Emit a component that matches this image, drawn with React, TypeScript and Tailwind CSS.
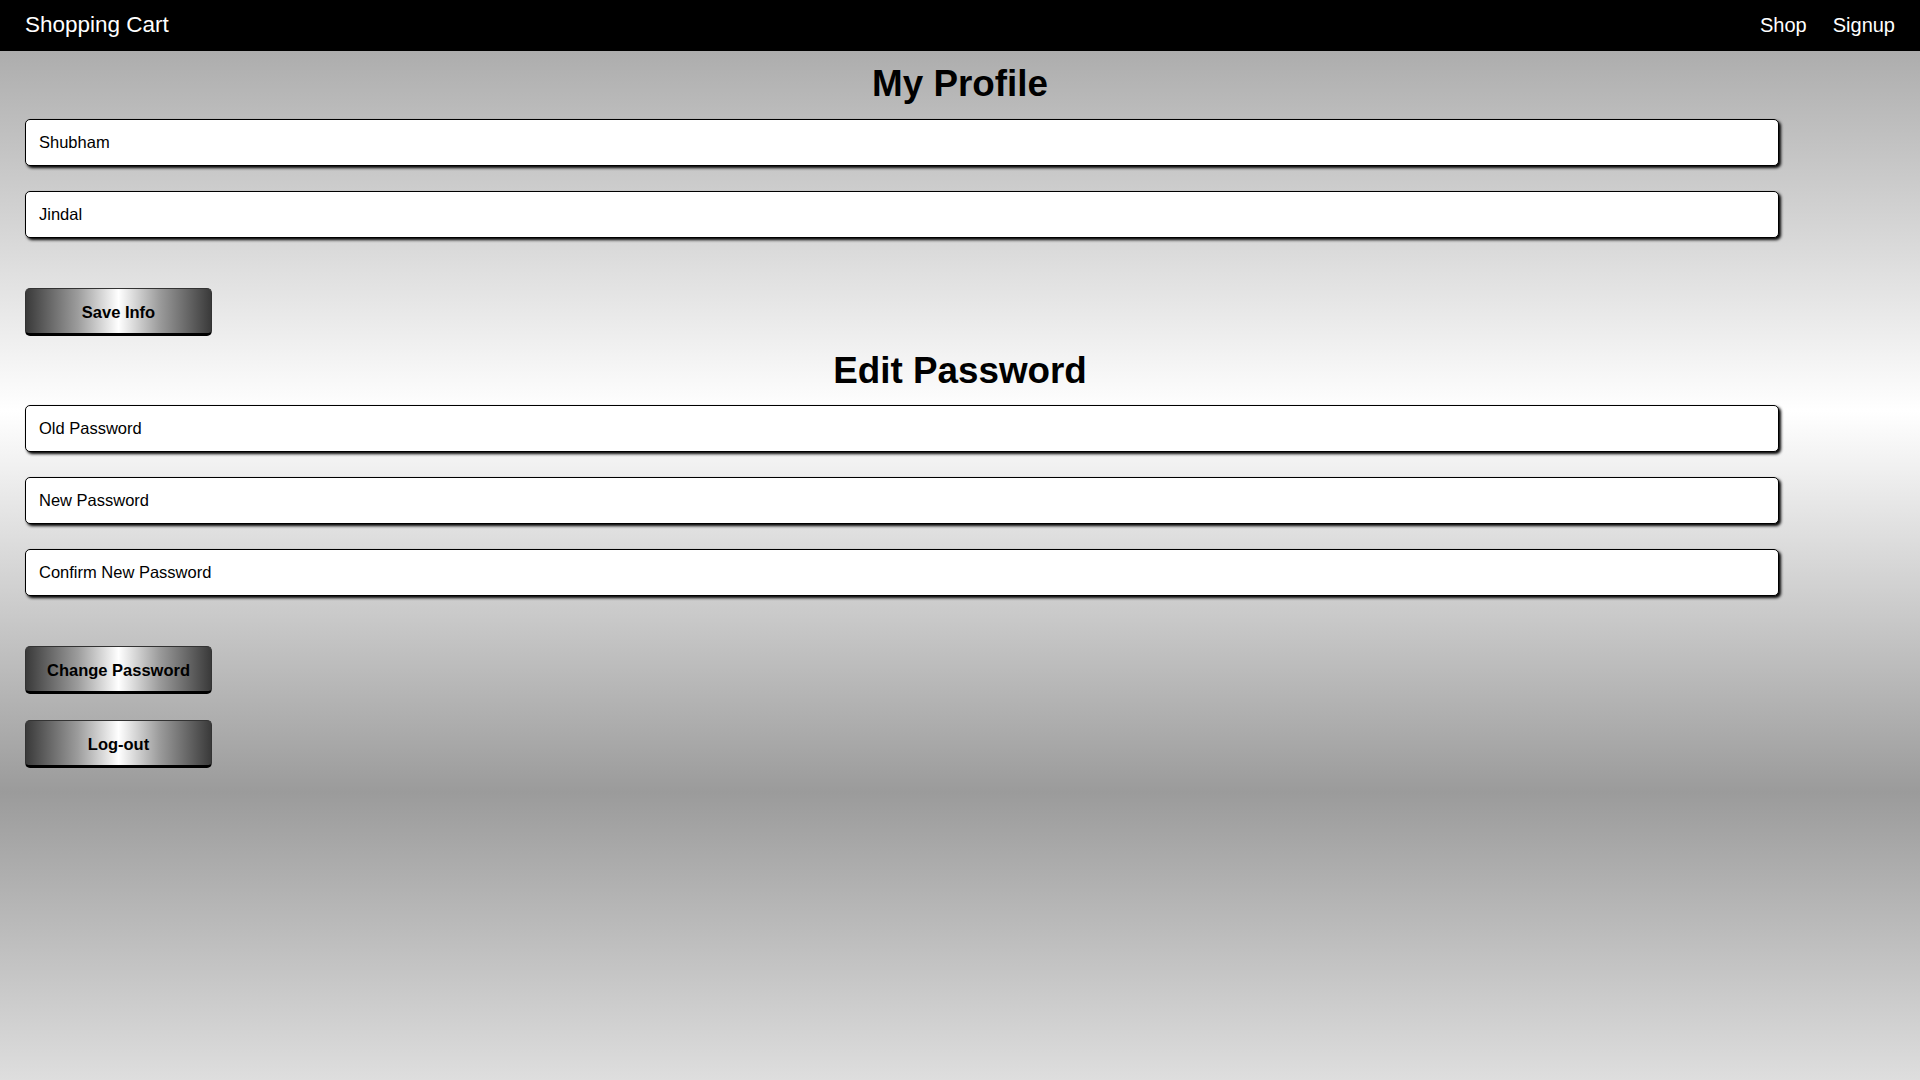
import React from "react";

const font = "font-['Liberation_Sans',Arial,sans-serif]";

const Field = ({ value, placeholder }: { value?: string; placeholder?: string }) => (
  <input
    defaultValue={value}
    placeholder={placeholder}
    className="block w-[1754px] h-[47px] rounded-[5px] border border-black bg-white pl-[13px] text-[16.5px] text-black placeholder:text-black shadow-[2px_2px_3px_#000] outline-none"
  />
);

const MetalButton = ({ label, className = "" }: { label: string; className?: string }) => (
  <button
    className={
      "block w-[187px] h-[48px] pt-[2px] rounded-[5px] border border-[#333] border-b-[3px] border-b-black bg-[linear-gradient(to_right,#3a3a3a_0%,#9c9c9c_28%,#ffffff_50%,#9c9c9c_72%,#3a3a3a_100%)] text-[16.5px] font-bold text-black " +
      className
    }
  >
    {label}
  </button>
);

const App = () => {
  return (
    <div className={`${font} min-h-screen`}>
      <nav className="h-[51px] bg-black flex items-center justify-between px-[25px] text-white">
        <span className="text-[22.5px] -mt-[1px]">Shopping Cart</span>
        <div className="flex items-center gap-[26px] text-[20px] -mt-[1px]">
          <a href="#">Shop</a>
          <a href="#">Signup</a>
        </div>
      </nav>

      <main className="h-[1029px] px-[25px] bg-[linear-gradient(to_bottom,#adadad_0%,#ffffff_35%,#9b9b9b_72%,#dedede_100%)]">
        <h1 className="pt-[12px] text-center text-[36.8px] leading-[41px] font-bold text-black">
          My Profile
        </h1>
        <div className="mt-[15px] flex flex-col gap-[25px]">
          <Field value="Shubham" />
          <Field value="Jindal" />
        </div>
        <MetalButton label="Save Info" className="mt-[50px]" />

        <h1 className="mt-[14px] text-center text-[36.8px] leading-[41px] font-bold text-black">
          Edit Password
        </h1>
        <div className="mt-[14px] flex flex-col gap-[25px]">
          <Field placeholder="Old Password" />
          <Field placeholder="New Password" />
          <Field placeholder="Confirm New Password" />
        </div>
        <MetalButton label="Change Password" className="mt-[50px]" />
        <MetalButton label="Log-out" className="mt-[26px]" />
      </main>
    </div>
  );
};

export default App;
